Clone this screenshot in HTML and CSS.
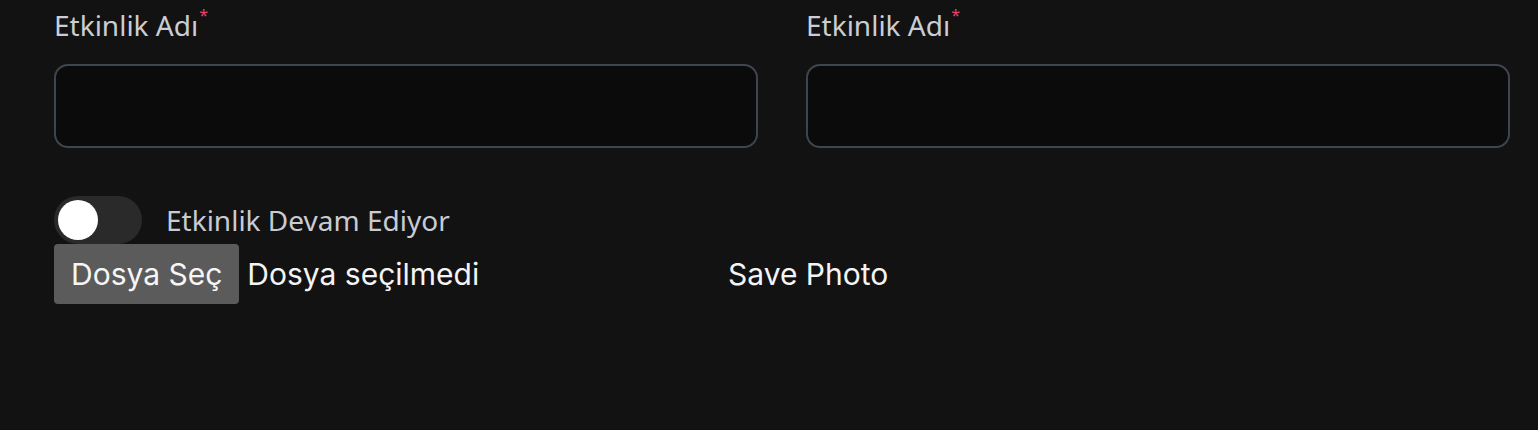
FILE: index.html
```html
<!DOCTYPE html>
<html lang="tr">

<head>
  <meta charset="UTF-8">
  <meta name="viewport" content="width=device-width, initial-scale=1.0">
  <title>Etkinlik</title>
  <link rel="stylesheet" href="styles.css">
</head>

<body>
  <div class="form">
    <div class="form-grid">
      <div class="field">
        <label class="field-label">Etkinlik Adı<span class="req">*</span></label>
        <input class="field-input" type="text">
      </div>
      <div class="field">
        <label class="field-label">Etkinlik Adı<span class="req">*</span></label>
        <input class="field-input" type="text">
      </div>
    </div>

    <div class="switch-row">
      <span class="switch"><span class="switch-knob"></span></span>
      <span class="switch-label">Etkinlik Devam Ediyor</span>
    </div>

    <div class="file-row">
      <div class="file-input">
        <span class="file-btn">Dosya Seç</span>
        <span class="file-name">Dosya seçilmedi</span>
      </div>
      <button class="save-btn" type="button">Save Photo</button>
    </div>
  </div>
</body>

</html>
```

FILE: styles.css
```css
* {
  margin: 0;
  padding: 0;
  box-sizing: border-box;
}

body {
  background: #121212;
  font-family: "Noto Sans", "Open Sans", sans-serif;
  color: #c9cdd3;
}

.form {
  padding: 7px 29px 0 54px;
}

.form-grid {
  display: grid;
  grid-template-columns: 704px 704px;
  column-gap: 48px;
}

.field-label {
  display: block;
  font-size: 28px;
  line-height: 36px;
  height: 36px;
  color: #caced4;
}

.field-label .req {
  color: #e8446a;
  font-size: 16px;
  vertical-align: top;
  line-height: 16px;
  margin-left: 1px;
}

.field-input {
  display: block;
  width: 100%;
  height: 84px;
  margin-top: 21px;
  background: #0b0b0b;
  border: 2px solid #3e4551;
  border-radius: 14px;
  outline: none;
}

.switch-row {
  display: flex;
  align-items: center;
  gap: 24px;
  margin-top: 48px;
}

.switch {
  display: flex;
  align-items: center;
  width: 88px;
  height: 48px;
  padding: 0 4px;
  background: #2a2a2a;
  border-radius: 24px;
}

.switch-knob {
  width: 40px;
  height: 40px;
  background: #fff;
  border-radius: 50%;
}

.switch-label {
  font-size: 28px;
  color: #c8ccd2;
}

.file-row {
  display: flex;
  align-items: center;
  font-family: Inter, "Liberation Sans", sans-serif;
  font-size: 30px;
  color: #f4f4f6;
}

.file-input {
  display: flex;
  align-items: center;
  gap: 8px;
  width: 674px;
}

.file-btn {
  display: block;
  height: 60px;
  line-height: 60px;
  padding: 0 17px;
  background: #5b5b5b;
  border-radius: 4px;
  color: #f6f6f6;
}

.save-btn {
  background: none;
  border: none;
  font: inherit;
  color: #f4f4f6;
}
```
